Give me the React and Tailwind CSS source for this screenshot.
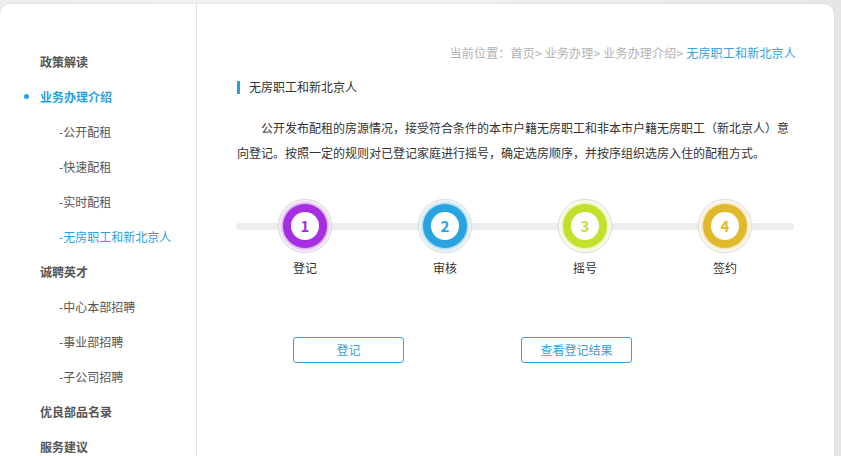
import React from "react";

const font = { fontFamily: '"Noto Sans CJK SC", "Noto Sans", sans-serif' };

const sideItems = [
  { t: "政策解读", lvl: 0 },
  { t: "业务办理介绍", lvl: 0, active: true },
  { t: "-公开配租", lvl: 1 },
  { t: "-快速配租", lvl: 1 },
  { t: "-实时配租", lvl: 1 },
  { t: "-无房职工和新北京人", lvl: 1, active: true },
  { t: "诚聘英才", lvl: 0 },
  { t: "-中心本部招聘", lvl: 1 },
  { t: "-事业部招聘", lvl: 1 },
  { t: "-子公司招聘", lvl: 1 },
  { t: "优良部品名录", lvl: 0 },
  { t: "服务建议", lvl: 0 },
];

const steps = [
  { n: "1", label: "登记", ring: "bg-[#a42ee0] shadow-[0_0_4px_1px_#c27ae8]", text: "text-[#a42ee0]" },
  { n: "2", label: "审核", ring: "bg-[#2aa4e0] shadow-[0_0_4px_1px_#7cc6ec]", text: "text-[#2aa4e0]" },
  { n: "3", label: "摇号", ring: "bg-[#c3e02c] shadow-[0_0_4px_1px_#dcef86]", text: "text-[#c3e02c]" },
  { n: "4", label: "签约", ring: "bg-[#e0b92d] shadow-[0_0_4px_1px_#eed488]", text: "text-[#e0b92d]" },
];

export default function App() {
  return (
    <div
      className="w-[841px] h-[456px] overflow-hidden bg-gradient-to-r from-[#eeeeee] via-[#f2f1ef] to-[#e6e6e6] pt-[4px]"
      style={font}
    >
      <div className="w-[834px] h-[540px] bg-white rounded-t-[10px] shadow-[0_0_2px_rgba(0,0,0,0.12)] flex">
        {/* Sidebar */}
        <div className="w-[197px] shrink-0 border-r border-[#e3e3e3] pt-[40px]">
          {sideItems.map((it, i) => (
            <div key={i} className="h-[35px] flex items-center relative">
              {it.active && it.lvl === 0 && (
                <span className="absolute left-[24px] top-[15px] w-[5px] h-[5px] rounded-full bg-[#2b9fde]" />
              )}
              <span
                className={
                  (it.lvl === 0 ? "pl-[40px] font-bold " : "pl-[59px] ") +
                  "text-[12px] leading-[20px] " +
                  (it.active ? "text-[#2b9fde]" : "text-[#555555]")
                }
              >
                {it.t}
              </span>
            </div>
          ))}
        </div>

        {/* Content */}
        <div className="flex-1 pl-[40px] pr-[38px] pt-[39px]">
          <div className="text-right text-[12px] leading-[20px] text-[#b0b0b0] tracking-[0.2px]">
            当前位置：首页&gt; 业务办理&gt; 业务办理介绍&gt; <span className="text-[#3aa2e0]">无房职工和新北京人</span>
          </div>

          <div className="mt-[14px] flex items-center h-[20px]">
            <span className="w-[3px] h-[13px] bg-[#2b9fde]" />
            <span className="ml-[9px] text-[12px] text-[#333333]">无房职工和新北京人</span>
          </div>

          <p className="mt-[18px] w-[558px] text-[12px] leading-[25px] text-[#333333] indent-[24px] whitespace-nowrap">
            公开发布配租的房源情况，接受符合条件的本市户籍无房职工和非本市户籍无房职工（新北京人）意
            <br />
            向登记。按照一定的规则对已登记家庭进行摇号，确定选房顺序，并按序组织选房入住的配租方式。
          </p>

          <div className="relative mt-[34px] ml-[-2px] w-[560px]">
            <div className="absolute left-[1px] top-[24px] w-[558px] h-[7px] rounded-full bg-[#ededed]" />
            <div className="relative flex">
              {steps.map((s) => (
                <div key={s.n} className="w-[140px] flex flex-col items-center">
                  <div className="w-[54px] h-[54px] rounded-full bg-white border border-[#dedede] shadow-[0_0_2px_rgba(0,0,0,0.08)] flex items-center justify-center">
                    <div className={"w-[44px] h-[44px] rounded-full flex items-center justify-center " + s.ring}>
                      <div className={"w-[28px] h-[28px] rounded-full bg-white flex items-center justify-center text-[15px] font-bold " + s.text}>
                        {s.n}
                      </div>
                    </div>
                  </div>
                  <div className="mt-[5px] text-[12px] leading-[20px] text-[#333333]">{s.label}</div>
                </div>
              ))}
            </div>
          </div>

          <div className="mt-[59px] ml-[56px] flex gap-[117px]">
            <button className="w-[111px] h-[26px] rounded-[3px] border border-[#3aa0dc] text-[12px] text-[#3aa0dc] bg-white">
              登记
            </button>
            <button className="w-[111px] h-[26px] rounded-[3px] border border-[#3aa0dc] text-[12px] text-[#3aa0dc] bg-white">
              查看登记结果
            </button>
          </div>
        </div>
      </div>
    </div>
  );
}
